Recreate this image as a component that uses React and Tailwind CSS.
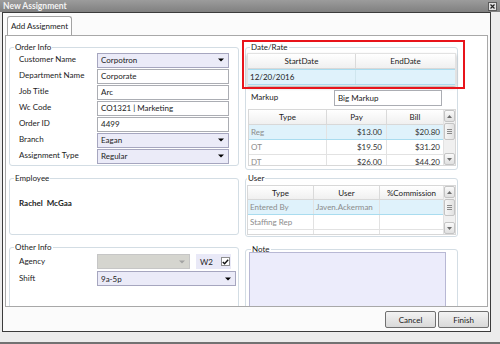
import React from "react";

const Arrow = ({ c = "#000" }) => (
  <svg width="6" height="4" viewBox="0 0 6 4" className="shrink-0">
    <path d="M0 0.5H6L3 3.5Z" fill={c} />
  </svg>
);

function Combo({ text, disabled, className = "" }) {
  return (
    <div
      className={`h-[15px] flex items-center border pl-[3px] pr-[4px] ${
        disabled ? "bg-[#d5d5cf] border-[#c6c6c6]" : "bg-[#ebebf8] border-[#a6a6bf]"
      } ${className}`}
    >
      <span className="flex-1 truncate">{text}</span>
      <Arrow c={disabled ? "#a3a3a3" : "#000"} />
    </div>
  );
}

function Input({ text, className = "" }) {
  return (
    <div className={`h-[15px] flex items-center border border-[#abadb3] bg-white pl-[3px] ${className}`}>
      {text}
    </div>
  );
}

function Row({ label, children }) {
  return (
    <div className="h-[16px] flex items-center">
      <span className="w-[78px] shrink-0 pb-[2px]">{label}</span>
      <div className="flex-1">{children}</div>
    </div>
  );
}

function Group({ label, className = "", legendClass = "ml-[-5px]", children }) {
  return (
    <fieldset className={`shrink-0 border border-[#d3dde4] rounded-[3px] min-w-0 ${className}`}>
      <legend className={`px-[1px] leading-[10px] ${legendClass}`}>{label}</legend>
      {children}
    </fieldset>
  );
}

function Scrollbar() {
  return (
    <div className="w-[12px] shrink-0 flex flex-col bg-[#f0f0f0] border-l border-[#e2e2e2]">
      <div className="h-[12px] border border-[#c4c4c4] rounded-[2px] bg-linear-to-b from-[#fafafa] to-[#e0e0e0] flex items-center justify-center">
        <svg width="5" height="3" viewBox="0 0 5 3">
          <path d="M0 3H5L2.5 0Z" fill="#6d6d6d" />
        </svg>
      </div>
      <div className="h-[17px] mt-[1px] border border-[#c4c4c4] rounded-[2px] bg-linear-to-r from-[#f6f6f6] to-[#e2e2e2] flex flex-col items-center justify-center gap-[1px]">
        <div className="w-[5px] h-[1px] bg-[#8a8a8a]" />
        <div className="w-[5px] h-[1px] bg-[#8a8a8a]" />
        <div className="w-[5px] h-[1px] bg-[#8a8a8a]" />
      </div>
      <div className="flex-1" />
      <div className="h-[12px] border border-[#c4c4c4] rounded-[2px] bg-linear-to-b from-[#fafafa] to-[#e0e0e0] flex items-center justify-center">
        <svg width="5" height="3" viewBox="0 0 5 3">
          <path d="M0 0H5L2.5 3Z" fill="#6d6d6d" />
        </svg>
      </div>
    </div>
  );
}

const hcell = "h-full flex items-center justify-center border-r border-[#dadada]";

function DateGrid() {
  return (
    <div className="border border-[#e2e2e2] bg-white shadow-[0_2px_3px_rgba(0,0,0,0.3)]">
      <div className="h-[15px] flex bg-linear-to-b from-white to-[#f0f0f0] border-b border-[#d8d8d8]">
        <div className={`w-[108px] ${hcell}`}>StartDate</div>
        <div className="flex-1 flex items-center justify-center">EndDate</div>
      </div>
      <div className="h-[16px] flex bg-[#dff2fb] border-y border-[#a9dcef]">
        <div className="w-[108px] flex items-center pl-[2px] border-r border-[#cfe6ee]">12/20/2016</div>
        <div className="flex-1" />
      </div>
    </div>
  );
}

function RateGrid() {
  const rows = [
    ["Reg", "$13.00", "$20.80", true],
    ["OT", "$19.50", "$31.20", false],
    ["DT", "$26.00", "$44.20", false],
  ];
  return (
    <div className="h-[57px] flex border border-[#d8d8d8] bg-white overflow-hidden">
      <div className="flex-1 flex flex-col">
        <div className="h-[15px] shrink-0 flex bg-linear-to-b from-white to-[#f0f0f0] border-b border-[#d8d8d8]">
          <div className={`w-[78px] ${hcell}`}>Type</div>
          <div className={`w-[60px] ${hcell}`}>Pay</div>
          <div className="flex-1 flex items-center justify-center">Bill</div>
        </div>
        {rows.map(([t, p, b, sel]) => (
          <div
            key={t}
            className={`h-[15px] shrink-0 flex border-b ${
              sel ? "bg-[#dff2fb] border-[#a9dcef]" : "border-[#e2e2e2]"
            }`}
          >
            <div className="w-[78px] flex items-center pl-[2px] text-[#8c8c8c] border-r border-[#e2e2e2]">{t}</div>
            <div className="w-[60px] flex items-center justify-end pr-[4px] text-[#333] border-r border-[#e2e2e2]">{p}</div>
            <div className="flex-1 flex items-center justify-end pr-[3px] text-[#333]">{b}</div>
          </div>
        ))}
      </div>
      <Scrollbar />
    </div>
  );
}

function UserGrid() {
  const rows = [
    ["Entered By", "Javen.Ackerman", true],
    ["Staffing Rep", "", false],
    ["", "", false],
  ];
  return (
    <div className="h-[50px] flex border border-[#d8d8d8] bg-white overflow-hidden">
      <div className="flex-1 flex flex-col">
        <div className="h-[14px] shrink-0 flex bg-linear-to-b from-white to-[#f0f0f0] border-b border-[#d8d8d8]">
          <div className={`w-[66px] ${hcell}`}>Type</div>
          <div className={`w-[66px] ${hcell}`}>User</div>
          <div className="flex-1 flex items-center justify-center">%Commission</div>
        </div>
        {rows.map(([t, u, sel], i) => (
          <div
            key={i}
            className={`h-[15px] shrink-0 flex border-b ${
              sel ? "bg-[#dff2fb] border-[#a9dcef]" : "border-[#e2e2e2]"
            }`}
          >
            <div className="w-[66px] flex items-center pl-[2px] text-[#8c8c8c] border-r border-[#e2e2e2]">{t}</div>
            <div className="w-[66px] flex items-center pl-[2px] text-[#8c8c8c] border-r border-[#e2e2e2]">{u}</div>
            <div className="flex-1" />
          </div>
        ))}
      </div>
      <Scrollbar />
    </div>
  );
}

export default function App() {
  return (
    <div className="w-[500px] h-[344px] bg-[#ececec] flex flex-col overflow-hidden font-['Lato',sans-serif] text-[8px] leading-[10px] text-[#1b1b1b]">
      {/* title bar */}
      <div className="h-[12px] shrink-0 flex items-center bg-linear-to-b from-[#9c9c9c] to-[#808080] pl-[3px] pr-[3px]">
        <span className="font-bold text-[#f3f3f3] text-[8.5px]">New Assignment</span>
        <div className="flex-1" />
        <div className="w-[9px] h-[9px] border border-[#5a5a5a] bg-[#e2e2e2] flex items-center justify-center">
          <svg width="5" height="5" viewBox="0 0 5 5">
            <path d="M0.5 0.5L4.5 4.5M4.5 0.5L0.5 4.5" stroke="#222" strokeWidth="1.2" />
          </svg>
        </div>
      </div>

      {/* body */}
      <div className="flex-1 flex pl-[2px] pr-[9px] min-h-0">
        <div className="flex-1 border border-[#3b3b3b] bg-[#fbfbfb] flex flex-col min-h-0">
          {/* tab header */}
          <div className="h-[22px] shrink-0 flex items-end pl-[4px]">
            <div className="w-[65px] h-[19px] border border-b-0 border-[#a3a3a3] rounded-t-[3px] bg-white flex items-center justify-center">
              Add Assignment
            </div>
          </div>
          {/* tab panel */}
          <div className="h-[272px] shrink-0 mx-[2px] border border-[#a8a8a8] bg-white overflow-hidden flex gap-[6px] pl-[3px] pt-[6px]">
            {/* left column */}
            <div className="w-[230px] shrink-0 flex flex-col gap-[7px]">
              <Group label="Order Info" className="px-[9px] pb-[1px]">
                <Row label="Customer Name">
                  <Combo text="Corpotron" />
                </Row>
                <Row label="Department Name">
                  <Input text="Corporate" />
                </Row>
                <Row label="Job Title">
                  <Input text="Arc" />
                </Row>
                <Row label="Wc Code">
                  <Input text="CO1321 | Marketing" />
                </Row>
                <Row label="Order ID">
                  <Input text="4499" />
                </Row>
                <Row label="Branch">
                  <Combo text="Eagan" />
                </Row>
                <Row label="Assignment Type">
                  <Combo text="Regular" />
                </Row>
              </Group>

              <Group label="Employee" className="h-[62px] px-[9px] pt-[15px]">
                <div className="font-bold">Rachel&nbsp; McGaa</div>
              </Group>

              <Group label="Other Info" className="h-[90px] pl-[9px] pr-[2px] pt-[2px]">
                <div className="h-[15px] flex items-center">
                  <span className="w-[78px] shrink-0 pb-[2px]">Agency</span>
                  <Combo text="" disabled className="w-[93px]" />
                  <div className="ml-[6px] w-[35px] h-[15px] bg-[#e9e9f7] flex items-center pl-[4px] pr-[1px]">
                    <span className="flex-1">W2</span>
                    <div className="w-[9px] h-[9px] border border-[#8e8e8e] bg-white flex items-center justify-center">
                      <svg width="7" height="6" viewBox="0 0 7 6">
                        <path d="M0.8 3L2.6 4.8L6.2 0.8" stroke="#111" strokeWidth="1.4" fill="none" />
                      </svg>
                    </div>
                  </div>
                </div>
                <div className="h-[15px] mt-[2px] flex items-center">
                  <span className="w-[78px] shrink-0 pb-[2px]">Shift</span>
                  <Combo text="9a-5p" className="w-[139px]" />
                </div>
              </Group>
            </div>

            {/* right column */}
            <div className="w-[213px] shrink-0 flex flex-col">
              <div className="relative shrink-0">
                <Group label="Date/Rate" className="px-[1px] pb-[3px]" legendClass="ml-[3px]">
                  <div className="pt-[1px]">
                    <DateGrid />
                  </div>
                  <div className="h-[16px] mt-[4px] flex items-center">
                    <span className="w-[87px] shrink-0 pl-[4px] pb-[3px]">Markup</span>
                    <Input text="Big Markup" className="w-[108px] h-[16px]" />
                  </div>
                  <div className="mt-[3px] ml-[1px]">
                    <RateGrid />
                  </div>
                </Group>
                <div className="absolute left-[-3px] top-[-2px] w-[223px] h-[49px] border-2 border-[#e8141b] pointer-events-none" />
              </div>

              <Group label="User" className="mt-[3px] px-[1px] pt-[2px] pb-[1px]" legendClass="ml-0">
                <UserGrid />
              </Group>

              <Group label="Note" className="mt-[7px] h-[90px] pl-[3px]" legendClass="ml-[2px]">
                <div className="w-[197px] h-[58px] bg-[#ececfb] border border-[#b8b8d4] -mt-[2px]" />
              </Group>
            </div>
          </div>

          {/* buttons */}
          <div className="flex justify-end gap-[2px] pt-[4px] pr-[1px]">
            <div className="w-[51px] h-[17px] border border-[#707070] rounded-[2px] bg-linear-to-b from-[#f3f3f3] to-[#d9d9d9] flex items-center justify-center">
              Cancel
            </div>
            <div className="w-[51px] h-[17px] border border-[#707070] rounded-[2px] bg-linear-to-b from-[#f3f3f3] to-[#d9d9d9] flex items-center justify-center">
              Finish
            </div>
          </div>
        </div>
      </div>

      {/* bottom strip */}
      <div className="h-[12px] shrink-0 border-b-2 border-[#727272]" />
    </div>
  );
}
